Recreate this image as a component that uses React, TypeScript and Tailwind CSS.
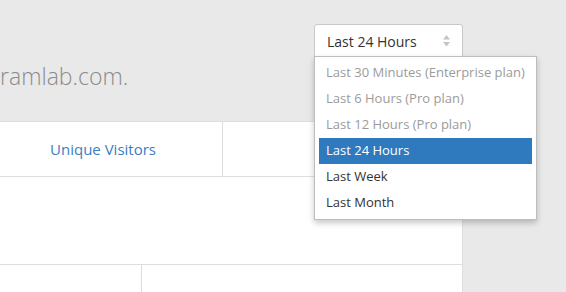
const options = [
  { label: "Last 30 Minutes (Enterprise plan)", disabled: true },
  { label: "Last 6 Hours (Pro plan)", disabled: true },
  { label: "Last 12 Hours (Pro plan)", disabled: true },
  { label: "Last 24 Hours", selected: true },
  { label: "Last Week" },
  { label: "Last Month" },
];

function UpDownIcon() {
  return (
    <svg width="7" height="12" viewBox="0 0 7 12" className="shrink-0">
      <path d="M3.5 0 L7 4.5 L0 4.5 Z" fill="#c4c4c4" />
      <path d="M3.5 11.5 L7 7 L0 7 Z" fill="#c4c4c4" />
    </svg>
  );
}

function RangeSelect() {
  return (
    <div className="relative">
      <div className="flex h-[34px] w-[149px] items-center justify-between rounded-t-[3px] border border-[#c9c9c9] bg-white pl-[12px] pr-[12px] text-[14px] text-[#333]">
        <span>Last 24 Hours</span>
        <UpDownIcon />
      </div>
      <ul className="absolute left-0 top-[32px] z-10 w-[223px] border border-[#bdbdbd] bg-white px-[4px] py-[3px] shadow-[0_3px_6px_rgba(0,0,0,0.22)]">
        {options.map((o) => (
          <li
            key={o.label}
            className={
              "flex h-[26px] items-center px-[7px] text-[13px] " +
              (o.selected ? "bg-[#2f7abf] text-white" : o.disabled ? "text-[#9b9b9b]" : "text-[#333]")
            }
          >
            {o.label}
          </li>
        ))}
      </ul>
    </div>
  );
}

export default function App() {
  return (
    <div className="h-[292px] overflow-hidden bg-[#e9e9e9]" style={{ fontFamily: '"Open Sans", sans-serif' }}>
      <div className="ml-[-17px] w-[480px]">
        <div className="flex justify-end pt-[24px]">
          <RangeSelect />
        </div>
        <p className="mt-[2px] pl-[17px] text-[23px] font-light leading-[32px] text-[#8c8c8c]">ramlab.com.</p>
        <div className="mt-[29px] border border-[#dedede] bg-white">
          <div className="grid h-[55px] grid-cols-2 border-b border-[#dedede]">
            <div className="flex items-center justify-center border-r border-[#dedede] text-[15px] text-[#3a7ec1]">
              Unique Visitors
            </div>
            <div />
          </div>
          <div className="h-[88px] border-b border-[#dedede]" />
          <div className="flex h-[40px]">
            <div className="w-[158px] border-r border-[#dedede]" />
            <div className="flex-1" />
          </div>
        </div>
      </div>
    </div>
  );
}
